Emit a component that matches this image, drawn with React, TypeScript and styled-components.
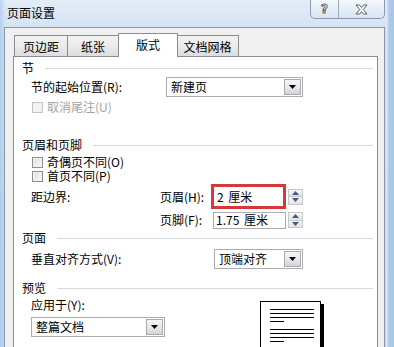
import React from "react";
import styled, { createGlobalStyle } from "styled-components";

const Global = createGlobalStyle`
  html, body { margin: 0; padding: 0; }
  body {
    width: 394px; height: 347px; overflow: hidden;
    font-family: "Noto Sans CJK SC", "Noto Sans", sans-serif;
    font-size: 12px; color: #000;
  }
`;

const Window = styled.div`
  width: 394px;
  height: 347px;
  overflow: hidden;
  display: flex;
  flex-direction: column;
  background:
    linear-gradient(90deg, rgba(160,195,232,0.6) 0px, rgba(255,255,255,0) 6px, rgba(255,255,255,0) 386px, rgba(230,240,250,0.9) 386px, rgba(170,200,232,0.9) 389px, #a9c5e4 394px),
    linear-gradient(180deg, #e3edf8 0%, #cfe0f2 10%, #c4d9ef 100%);
`;

const TitleBar = styled.div`
  height: 27px;
  flex: none;
  display: flex;
  align-items: flex-start;
`;

const Title = styled.div`
  margin-left: 7px;
  line-height: 26px;
  font-size: 12px;
`;

const CaptionGroup = styled.div`
  margin-left: auto;
  margin-right: 9px;
  display: flex;
  height: 18px;
  border: 1px solid #8a9bb0;
  border-top: none;
  border-radius: 0 0 5px 5px;
  background: linear-gradient(180deg, rgba(255,255,255,0.6), rgba(214,228,244,0.6));
  overflow: hidden;
`;

const CaptionButton = styled.div<{ $w: number; $divider?: boolean }>`
  width: ${(p) => p.$w}px;
  display: flex;
  align-items: center;
  justify-content: center;
  ${(p) => (p.$divider ? "border-right: 1px solid #9aabbf;" : "")}
`;

const HelpGlyph = styled.span`
  font-family: "DejaVu Sans", sans-serif;
  font-weight: bold;
  font-size: 12px;
  color: #fff;
  -webkit-text-stroke: 1px #666;
  line-height: 12px;
`;

const Client = styled.div`
  flex: 1;
  margin-left: 4px;
  width: 381px;
  box-sizing: border-box;
  border: 1px solid #8796aa;
  border-bottom: none;
  background: #f0f0f0;
  padding: 5px 6px 0 8px;
  display: flex;
  flex-direction: column;
`;

const TabStrip = styled.div`
  display: flex;
  align-items: flex-end;
  height: 24px;
  margin-bottom: -1px;
  padding-left: 1px;
  position: relative;
  z-index: 1;
`;

const Tab = styled.div<{ $w: number; $active?: boolean }>`
  box-sizing: border-box;
  width: ${(p) => p.$w}px;
  height: ${(p) => (p.$active ? 24 : 22)}px;
  margin-left: ${(p) => (p.$active ? -1 : 0)}px;
  margin-right: ${(p) => (p.$active ? -1 : 0)}px;
  border: 1px solid #898c95;
  border-left-width: ${(p) => (p.$active ? 1 : 0)}px;
  ${(p) => (p.$active ? "border-bottom: none;" : "")}
  background: ${(p) => (p.$active ? "#fff" : "linear-gradient(180deg, #f3f3f3 0%, #ebebeb 50%, #dddddd 100%)")};
  position: relative;
  z-index: ${(p) => (p.$active ? 2 : 1)};
  display: flex;
  align-items: center;
  justify-content: center;
  padding-bottom: ${(p) => (p.$active ? 2 : 0)}px;
  &:first-child { border-left-width: 1px; }
`;

const Panel = styled.div`
  flex: 1;
  background: #fff;
  border: 1px solid #898c95;
  border-bottom: none;
  display: flex;
  flex-direction: column;
`;

const SectionHeader = styled.div<{ $mt: number }>`
  display: flex;
  align-items: center;
  height: 14px;
  margin-top: ${(p) => p.$mt}px;
  padding-left: 8px;
  padding-right: 4px;
  line-height: 14px;
`;

const Rule = styled.div`
  flex: 1;
  height: 1px;
  margin-left: 11px;
  background: #d5dadf;
`;

const Row = styled.div<{ $mt: number; $h: number }>`
  display: flex;
  align-items: center;
  height: ${(p) => p.$h}px;
  margin-top: ${(p) => p.$mt}px;
  padding-left: 17px;
  line-height: 14px;
`;

const CheckRow = styled(Row)`
  padding-left: 18px;
`;

const Label = styled.div<{ $w: number }>`
  width: ${(p) => p.$w}px;
  flex: none;
  white-space: nowrap;
`;

const Box = styled.div<{ $disabled?: boolean }>`
  box-sizing: border-box;
  width: 11px;
  height: 11px;
  border: 1px solid ${(p) => (p.$disabled ? "#c2c4c6" : "#8e8f8f")};
  background: ${(p) =>
    p.$disabled ? "#f4f4f4" : "linear-gradient(135deg, #dcdcdc 0%, #f0f0f0 60%, #fafafa 100%)"};
  box-shadow: inset 0 0 0 1px ${(p) => (p.$disabled ? "#f0f0f0" : "#f4f4f4")};
  margin-right: 4px;
  flex: none;
`;

const CheckText = styled.div<{ $disabled?: boolean }>`
  color: ${(p) => (p.$disabled ? "#a3a3a3" : "#000")};
  white-space: nowrap;
  height: 14px;
  line-height: 14px;
  overflow: visible;
`;

const Select = styled.div<{ $w: number }>`
  box-sizing: border-box;
  width: ${(p) => p.$w}px;
  height: 20px;
  border: 1px solid #a9adb3;
  background: #fff;
  display: flex;
  align-items: center;
  padding: 1px;
`;

const SelectText = styled.div`
  flex: 1;
  padding-left: 3px;
  white-space: nowrap;
`;

const DropButton = styled.div`
  box-sizing: border-box;
  width: 17px;
  height: 16px;
  border: 1px solid #a6abb2;
  background: linear-gradient(180deg, #f5f5f5 0%, #e9e9e9 50%, #d4d4d4 100%);
  display: flex;
  align-items: center;
  justify-content: center;
`;

const TextInput = styled.div<{ $highlight?: boolean }>`
  box-sizing: border-box;
  width: ${(p) => (p.$highlight ? 75 : 73)}px;
  height: ${(p) => (p.$highlight ? 25 : 17)}px;
  border: ${(p) => (p.$highlight ? "3px solid #d6393b" : "1px solid #abadb3")};
  background: #fff;
  display: flex;
  align-items: center;
  padding-left: ${(p) => (p.$highlight ? 3 : 2)}px;
  white-space: nowrap;
  word-spacing: 2px;
`;

const Spinner = styled.div`
  box-sizing: border-box;
  width: 15px;
  height: 16px;
  margin-left: 2px;
  border: 1px solid #c5c9ce;
  display: flex;
  flex-direction: column;
`;

const SpinHalf = styled.div`
  flex: 1;
  display: flex;
  align-items: center;
  justify-content: center;
  background: linear-gradient(180deg, #f6f6f6, #e2e4e8);
  & + & { border-top: 1px solid #c5c9ce; }
`;

const PreviewArea = styled.div`
  display: flex;
  align-items: flex-start;
  margin-top: 3px;
  padding-left: 17px;
`;

const PreviewLeft = styled.div`
  width: 134px;
  display: flex;
  flex-direction: column;
  gap: 5px;
  line-height: 14px;
`;

const Page = styled.div`
  box-sizing: border-box;
  width: 61px;
  height: 70px;
  margin-left: 95px;
  margin-top: 3px;
  border: 1px solid #000;
  box-shadow: 3px 3px 0 #000;
  background: #fff;
  padding: 7px 0 0 9px;
  display: flex;
  flex-direction: column;
  gap: 7px;
`;

const LineGroup = styled.div`
  display: flex;
  flex-direction: column;
  gap: 3px;
`;

const TextLine = styled.div<{ $short?: boolean }>`
  height: 1px;
  width: ${(p) => (p.$short ? 14 : 44)}px;
  background: #000;
`;

const Arrow = ({ up, color }: { up?: boolean; color: string }) => (
  <svg width="7" height="4" viewBox="0 0 7 4">
    <path d={up ? "M0 4 L3.5 0 L7 4 Z" : "M0 0 L7 0 L3.5 4 Z"} fill={color} />
  </svg>
);

const Drop = () => (
  <DropButton>
    <Arrow color="#000" />
  </DropButton>
);

const Spin = () => (
  <Spinner>
    <SpinHalf>
      <Arrow up color="#4a5a78" />
    </SpinHalf>
    <SpinHalf>
      <Arrow color="#4a5a78" />
    </SpinHalf>
  </Spinner>
);

const CloseGlyph = () => (
  <svg width="13" height="11" viewBox="0 0 13 11">
    <path
      d="M1 1 L4.5 1 L6.5 3.5 L8.5 1 L12 1 L8.3 5.5 L12 10 L8.5 10 L6.5 7.5 L4.5 10 L1 10 L4.7 5.5 Z"
      fill="#fff"
      stroke="#5c5c5c"
      strokeWidth="1"
      strokeLinejoin="round"
    />
  </svg>
);

const Group = ({ lines }: { lines: number }) => (
  <LineGroup>
    {Array.from({ length: lines }).map((_, i) => (
      <TextLine key={i} />
    ))}
    <TextLine $short />
  </LineGroup>
);

export default function App() {
  return (
    <>
      <Global />
      <Window>
        <TitleBar>
          <Title>页面设置</Title>
          <CaptionGroup>
            <CaptionButton $w={27} $divider>
              <HelpGlyph>?</HelpGlyph>
            </CaptionButton>
            <CaptionButton $w={45}>
              <CloseGlyph />
            </CaptionButton>
          </CaptionGroup>
        </TitleBar>
        <Client>
          <TabStrip>
            <Tab $w={54}>页边距</Tab>
            <Tab $w={51}>纸张</Tab>
            <Tab $w={60} $active>
              版式
            </Tab>
            <Tab $w={62}>文档网格</Tab>
          </TabStrip>
          <Panel>
            <SectionHeader $mt={4}>
              <span>节</span>
              <Rule />
            </SectionHeader>
            <Row $mt={2} $h={20}>
              <Label $w={135}>节的起始位置(R):</Label>
              <Select $w={137}>
                <SelectText>新建页</SelectText>
                <Drop />
              </Select>
            </Row>
            <CheckRow $mt={3} $h={14}>
              <Box $disabled />
              <CheckText $disabled>取消尾注(U)</CheckText>
            </CheckRow>

            <SectionHeader $mt={24}>
              <span>页眉和页脚</span>
              <Rule />
            </SectionHeader>
            <CheckRow $mt={3} $h={14}>
              <Box />
              <CheckText>奇偶页不同(O)</CheckText>
            </CheckRow>
            <CheckRow $mt={0} $h={14}>
              <Box />
              <CheckText>首页不同(P)</CheckText>
            </CheckRow>
            <Row $mt={1} $h={25}>
              <Label $w={129}>距边界:</Label>
              <Label $w={51}>页眉(H):</Label>
              <TextInput $highlight>2 厘米</TextInput>
              <Spin />
            </Row>
            <Row $mt={2} $h={18}>
              <Label $w={129} />
              <Label $w={53}>页脚(F):</Label>
              <TextInput>1.75 厘米</TextInput>
              <Spin />
            </Row>

            <SectionHeader $mt={2}>
              <span>页面</span>
              <Rule />
            </SectionHeader>
            <Row $mt={4} $h={20}>
              <Label $w={183}>垂直对齐方式(V):</Label>
              <Select $w={89}>
                <SelectText>顶端对齐</SelectText>
                <Drop />
              </Select>
            </Row>

            <SectionHeader $mt={12}>
              <span>预览</span>
              <Rule />
            </SectionHeader>
            <PreviewArea>
              <PreviewLeft>
                <div>应用于(Y):</div>
                <Select $w={134}>
                  <SelectText>整篇文档</SelectText>
                  <Drop />
                </Select>
              </PreviewLeft>
              <Page>
                <Group lines={3} />
                <Group lines={3} />
              </Page>
            </PreviewArea>
          </Panel>
        </Client>
      </Window>
    </>
  );
}
